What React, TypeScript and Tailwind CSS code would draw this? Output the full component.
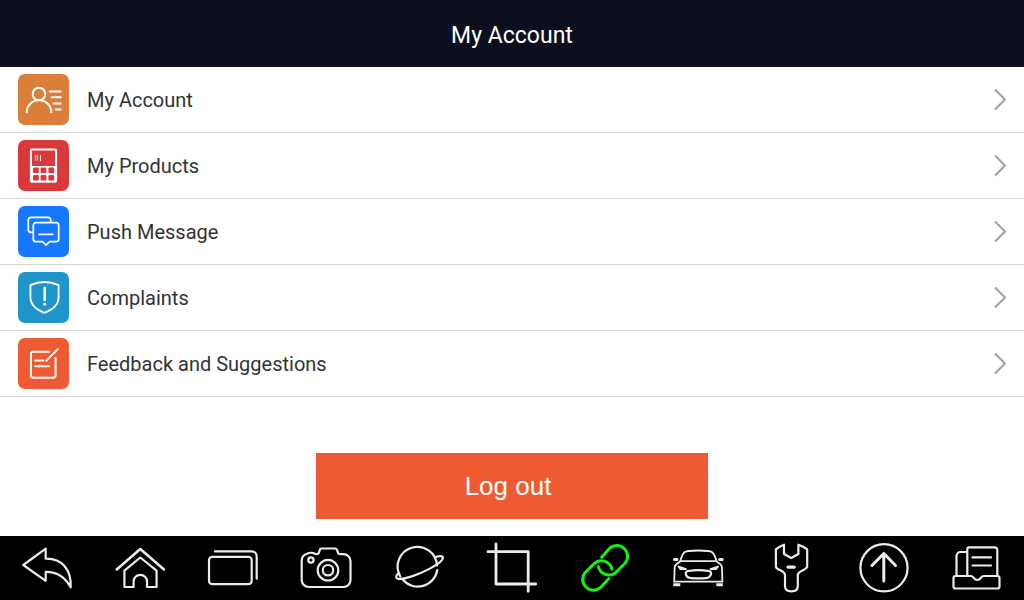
import type { ReactNode } from "react"

interface MenuItem {
  label: string
  color: string
  icon: ReactNode
}

interface NavItem {
  label: string
  active?: boolean
  icon: ReactNode
}

const menuItems: MenuItem[] = [
  {
    label: "My Account",
    color: "bg-[#db7e3a]",
    icon: (
      <>
        <circle cx="21" cy="20" r="6.3" />
        <path d="M8.8 38.3c0-7 5.3-12 12.2-12s12.3 5 12.3 12" />
        <path d="M31.7 17.4h11M33.7 23.3h9M35.7 29.4h7M37.7 35.4h5" />
      </>
    ),
  },
  {
    label: "My Products",
    color: "bg-[#d9393a]",
    icon: (
      <>
        <rect x="12.9" y="9.6" width="25.2" height="32.2" rx="0.8" />
        <path d="M13 26h25v16H13z" fill="currentColor" stroke="none" />
        <g fill="#d9393a" stroke="none">
          <rect x="15" y="27.5" width="5.8" height="5.6" rx="1.2" />
          <rect x="22.6" y="27.5" width="5.8" height="5.6" rx="1.2" />
          <rect x="30.4" y="27.5" width="5.8" height="5.6" rx="1.2" />
          <rect x="15" y="35" width="5.8" height="5.6" rx="1.2" />
          <rect x="22.6" y="35" width="5.8" height="5.6" rx="1.2" />
          <rect x="30.4" y="35" width="5.8" height="5.6" rx="1.2" />
        </g>
        <path d="M17.5 15v6M19.5 15v6" strokeWidth="1.4" opacity="0.5" strokeLinecap="butt" />
        <path d="M22.5 15v6" strokeWidth="1" strokeLinecap="butt" />
      </>
    ),
  },
  {
    label: "Push Message",
    color: "bg-[#1677ff]",
    icon: (
      <g strokeWidth="1.7">
        <path d="M14.3 26.3h-1.5a2.5 2.5 0 0 1-2.5-2.5V14a2.7 2.7 0 0 1 2.7-2.7h17A2.7 2.7 0 0 1 32.7 14v2" />
        <path d="M18 16.7h20a2.7 2.7 0 0 1 2.7 2.7V33a2.7 2.7 0 0 1-2.7 2.7h-6.3L28 39.2l-3.5-3.5H18a2.7 2.7 0 0 1-2.7-2.7V19.4a2.7 2.7 0 0 1 2.7-2.7z" />
        <path d="M21.2 28.4h13.6" />
      </g>
    ),
  },
  {
    label: "Complaints",
    color: "bg-[#2095c9]",
    icon: (
      <>
        <path d="M26.5 10c-4.5 0-9.5 1.2-14.1 3.2V25c0 7.5 5.4 12.5 14.1 15.8C35.2 37.5 40.6 32.5 40.6 25V13.2C36 11.2 31 10 26.5 10z" strokeWidth="1.8" />
        <path d="M26.7 15.7v12.2" strokeWidth="2.5" />
        <path d="M26.7 32.2v.1" strokeWidth="2.8" />
      </>
    ),
  },
  {
    label: "Feedback and Suggestions",
    color: "bg-[#ee5a32]",
    icon: (
      <>
        <path d="M31.3 13.7H15A2.2 2.2 0 0 0 12.9 16v21.5a2.2 2.2 0 0 0 2.1 2.2h20.5a2.2 2.2 0 0 0 2.1-2.2V20" />
        <path d="M39.7 11.3 28.2 22.7M17.3 22.5h8M17.3 28.2h13.8" />
      </>
    ),
  },
]

const navItems: NavItem[] = [
  {
    label: "Back",
    icon: <path d="M6.3 29 28.7 12.7v10C44.5 22.3 54.5 33 53.7 51.3 48 41 40.5 35.7 28.7 35.9v8.9z" />,
  },
  {
    label: "Home",
    icon: (
      <>
        <path d="M6.7 33.4 30.3 13l23.7 20.4" strokeWidth="2.6" />
        <path d="M14.4 51V34.7L30.3 21.5l16.3 13.2V51H37v-5.5a6.7 6.7 0 0 0-13.4 0V51z" />
      </>
    ),
  },
  {
    label: "Recent apps",
    icon: (
      <>
        <rect x="6" y="20.8" width="42.7" height="27.4" rx="3.2" />
        <path d="M11.9 15.4h36.8a5 5 0 0 1 5 5v22.3" />
      </>
    ),
  },
  {
    label: "Screenshot",
    icon: (
      <>
        <path d="M11.5 17.5c1.5-1 5.5-1 7 0 .6.6 1.3.7 2 .7 1.5 0 2-.3 2.3-1.3l1-3c.3-1 .8-1.4 1.8-1.4h13.6c1 0 1.5.4 1.8 1.4l1 3c.3 1 .8 1.3 2 1.3h3.500a7 7 0 0 1 7 7V44a7 7 0 0 1-7 7h-35A7 7 0 0 1 5.7 44V25c0-4 2-6.5 5.8-7.5z" />
        <circle cx="32" cy="34.2" r="10.3" />
        <circle cx="32" cy="34.2" r="5.2" />
        <circle cx="14.9" cy="24" r="2.7" />
      </>
    ),
  },
  {
    label: "Browser",
    icon: (
      <>
        <path d="M48 29.5A19.7 19.7 0 1 0 11.3 40.5M13.7 43.5A19.7 19.7 0 0 0 48.3 34" />
        <path d="M46.3 21.3c4-1.6 7.5-1.6 7.6.5.1 2.5-5.3 6.7-12.6 10.6C29 39 15 43.7 9.5 42.8c-4-.7-2.3-4.3.7-5.6" />
      </>
    ),
  },
  {
    label: "Crop",
    icon: <path d="M14 8v40h39.7M6 15.7h40.2v39.6" strokeWidth="2.8" />,
  },
  {
    label: "VCI connection",
    active: true,
    icon: (
      <g strokeWidth="3">
        <path d="M26.7 21.3 34.9 12A10.8 10.8 0 0 1 50.1 27.2L41.7 35.6A10.8 10.8 0 0 1 23.4 30.6" />
        <path d="M33.9 42.6 25.4 51.7A10.8 10.8 0 0 1 10.2 36.5L18.6 28.1A10.8 10.8 0 0 1 36.9 33.1" />
      </g>
    ),
  },
  {
    label: "Vehicle",
    icon: (
      <g strokeWidth="1.8">
        <path d="M12.3 25.2c1-4 2.3-7.5 4.2-9 1.3-1 7-1.7 13.8-1.7s12.5.7 13.8 1.7c1.9 1.5 3.4 5 4.4 9" />
        <path d="M12.3 25.2h36.2M12 25.6c-3 1.700-4.700 3.200-5.300 5.200L6.200 45.700h48.200l-.5-15c-.6-2-2.400-3.500-5.400-5.200" />
        <path d="M6.5 23.4h2.5M51.7 23.4h2.500" strokeWidth="3" />
        <path d="m10.5 30.5 7.5 2.500-5.500.2zM50 30.500l-7.500 2.500 5.500.2z" fill="currentColor" />
        <path d="M20 35c6-.9 15-.9 21 0 1.500.3 2.300 1.500 2 3-.7 3-2.500 4-5 4.100-5 .3-10 .3-15 0-3-.1-4.700-1.400-5.200-4.100-.2-1.500.7-2.700 2.200-3z" strokeWidth="2.200" />
        <path d="M5.300 48.800h7M48.300 48.800h6.500" strokeWidth="3" strokeLinecap="butt" />
      </g>
    ),
  },
  {
    label: "Settings",
    icon: (
      <>
        <path d="M14.9 13.3c2.3-2 5-3.5 8.1-4.6V18l7.2 4 7.2-4V8.7c3.3 1.1 6.3 2.6 8.8 4.6v17.5c-.5 1.5-2.2 2.5-4.2 3.4-3.2 1.3-5.2 2.5-5.2 5v11c0 3.5-2.5 5.1-6.4 5.1S24 53.7 24 50.2v-11c0-2.5-1.6-3.7-4.6-5-2.3-.9-4-1.9-4.5-3.4z" />
        <path d="M27 31.1h6.3" strokeWidth="3.2" />
      </>
    ),
  },
  {
    label: "Update",
    icon: (
      <>
        <circle cx="30" cy="31.8" r="23.6" />
        <path d="M29.8 45V17.5M18 29.5 29.8 17.5 41.5 29.5" strokeWidth="3" />
      </>
    ),
  },
  {
    label: "Data manager",
    icon: (
      <>
        <path d="M20.3 40V12.9a1.5 1.5 0 0 1 1.5-1.5h26a2.5 2.5 0 0 1 2.5 2.5V40M9.5 40V20a4 4 0 0 1 4-4h6.5" />
        <path d="M25.5 21.4h18.5M25.5 29.5h18.5" />
        <path d="M8.5 40h15c2.3 0 2.5 1 3.4 2.2 1.7 2.4 5 2.4 6.7 0 .9-1.2 1.3-2.2 3.4-2.2h13.5a2 2 0 0 1 2 2v8.5a2 2 0 0 1-2 2h-42a2 2 0 0 1-2-2V42a2 2 0 0 1 2-2z" />
      </>
    ),
  },
]

function MenuRow({ label, color, icon }: MenuItem) {
  return (
    <li className="border-b border-[#d5d5d5]">
      <a href="#" className="flex items-center gap-[18px] px-[18px] py-[7px]">
        <span className={`flex size-[51px] shrink-0 rounded-[7px] text-white ${color}`}>
          <svg
            viewBox="0 0 51 51"
            className="size-full"
            fill="none"
            stroke="currentColor"
            strokeWidth="2"
            strokeLinecap="round"
            strokeLinejoin="round"
            aria-hidden="true"
          >
            {icon}
          </svg>
        </span>
        <span className="flex-1 text-xl text-[#333333]">{label}</span>
        <svg viewBox="0 0 12 24" className="h-6 w-3 text-[#a0a0a0]" fill="none" stroke="currentColor" strokeWidth="2" aria-hidden="true">
          <path d="M1 1.5 11 11.5 1 21.5" />
        </svg>
      </a>
    </li>
  )
}

export default function App() {
  return (
    <div className="flex min-h-screen flex-col bg-white font-[Roboto,sans-serif]">
      <header className="flex h-[67px] items-center justify-center bg-[#0c0f1d] pt-1">
        <h1 className="text-[23px] leading-8 text-white">My Account</h1>
      </header>

      <main className="flex flex-1 flex-col">
        <ul>
          {menuItems.map((item) => (
            <MenuRow key={item.label} {...item} />
          ))}
        </ul>
        <div className="flex justify-center pt-14 pb-4">
          <button
            type="button"
            className="h-[66px] w-[392px] bg-[#ee5a32] pr-2 font-['Liberation_Sans',Arial,sans-serif] text-[26px] text-white"
          >
            Log out
          </button>
        </div>
      </main>

      {/* System bar */}
      <nav className="flex h-16 items-center justify-between bg-black px-[17px]">
        {navItems.map((item) => (
          <button
            key={item.label}
            type="button"
            aria-label={item.label}
            className={item.active ? "text-[#12ef12]" : "text-[#ececec]"}
          >
            <svg
              viewBox="0 0 60 64"
              className="h-16 w-[60px]"
              fill="none"
              stroke="currentColor"
              strokeWidth="2.2"
              strokeLinecap="round"
              strokeLinejoin="round"
              aria-hidden="true"
            >
              {item.icon}
            </svg>
          </button>
        ))}
      </nav>
    </div>
  )
}
